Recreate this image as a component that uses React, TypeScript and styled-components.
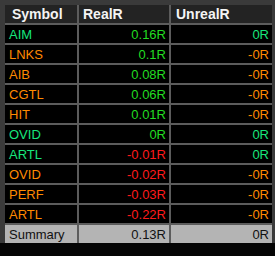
import React from 'react'
import styled, { createGlobalStyle } from 'styled-components'

const GlobalStyle = createGlobalStyle`
  html, body {
    margin: 0;
    padding: 0;
    background: #050505;
  }
`

const Frame = styled.div`
  width: 275px;
  box-sizing: border-box;
  background: #3a3a3a;
  padding: 5px 3px 0 5px;
`

const Grid = styled.div`
  display: grid;
  grid-template-columns: 72px 90px 101px;
  grid-auto-rows: 18px;
  gap: 2px;
  background: #5c5c5c;
  font-family: "Liberation Sans", Arial, sans-serif;
  font-size: 13px;
`

const HeadCell = styled.div<{ $pad?: number }>`
  background: #232323;
  color: #f4f4f4;
  font-weight: bold;
  font-size: 14px;
  display: flex;
  align-items: center;
  padding-left: ${(p) => p.$pad ?? 4}px;
`

const Cell = styled.div<{ $color: string; $right?: boolean; $summary?: boolean }>`
  background: ${(p) => (p.$summary ? '#b4b4b4' : '#000')};
  color: ${(p) => p.$color};
  display: flex;
  align-items: center;
  justify-content: ${(p) => (p.$right ? 'flex-end' : 'flex-start')};
  padding: 0 ${(p) => (p.$right ? 3 : 4)}px;
`

const MINT = '#17e67c'
const GREEN = '#22dd22'
const ORANGE = '#ff8a00'
const RED = '#ff1a1a'

const rows = [
  { sym: 'AIM', symColor: MINT, real: '0.16R', realColor: GREEN, unreal: '0R', unrealColor: MINT },
  { sym: 'LNKS', symColor: ORANGE, real: '0.1R', realColor: GREEN, unreal: '-0R', unrealColor: ORANGE },
  { sym: 'AIB', symColor: ORANGE, real: '0.08R', realColor: GREEN, unreal: '-0R', unrealColor: ORANGE },
  { sym: 'CGTL', symColor: ORANGE, real: '0.06R', realColor: GREEN, unreal: '-0R', unrealColor: ORANGE },
  { sym: 'HIT', symColor: ORANGE, real: '0.01R', realColor: GREEN, unreal: '-0R', unrealColor: ORANGE },
  { sym: 'OVID', symColor: MINT, real: '0R', realColor: GREEN, unreal: '0R', unrealColor: MINT },
  { sym: 'ARTL', symColor: MINT, real: '-0.01R', realColor: RED, unreal: '0R', unrealColor: MINT },
  { sym: 'OVID', symColor: ORANGE, real: '-0.02R', realColor: RED, unreal: '-0R', unrealColor: ORANGE },
  { sym: 'PERF', symColor: ORANGE, real: '-0.03R', realColor: RED, unreal: '-0R', unrealColor: ORANGE },
  { sym: 'ARTL', symColor: ORANGE, real: '-0.22R', realColor: RED, unreal: '-0R', unrealColor: ORANGE },
]

const App = () => (
  <>
    <GlobalStyle />
    <Frame>
      <Grid>
        <HeadCell $pad={7}>Symbol</HeadCell>
        <HeadCell>RealR</HeadCell>
        <HeadCell $pad={5}>UnrealR</HeadCell>
        {rows.map((r, i) => (
          <React.Fragment key={i}>
            <Cell $color={r.symColor}>{r.sym}</Cell>
            <Cell $color={r.realColor} $right>{r.real}</Cell>
            <Cell $color={r.unrealColor} $right>{r.unreal}</Cell>
          </React.Fragment>
        ))}
        <Cell $color="#111" $summary>Summary</Cell>
        <Cell $color="#111" $summary $right>0.13R</Cell>
        <Cell $color="#111" $summary $right>0R</Cell>
      </Grid>
    </Frame>
  </>
)

export default App
